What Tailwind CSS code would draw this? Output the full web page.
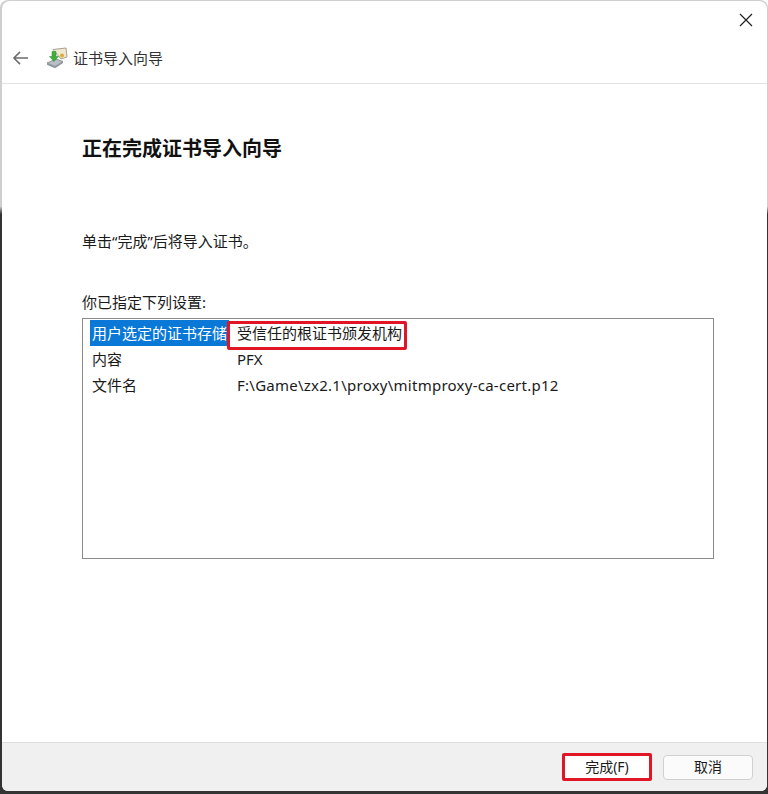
<!DOCTYPE html>
<html lang="zh-CN">
<head>
  <meta charset="UTF-8">
  <title>证书导入向导</title>
  <script src="https://cdn.jsdelivr.net/npm/@tailwindcss/browser@4"></script>
</head>
<body class="w-[768px] h-[794px] overflow-hidden bg-white font-['Noto_Sans','Noto_Sans_CJK_SC',sans-serif] text-[#1a1a1a]">

  <!-- Window -->
  <div class="w-[768px] h-[794px] bg-gradient-to-b from-[#cfcfcf] from-[26%] to-[#333] to-[27%] rounded-t-lg pt-px pl-[2px] pr-px pb-[3px]">
    <div class="h-full flex flex-col bg-white rounded-t-lg rounded-b-md overflow-hidden">

      <!-- Title bar -->
      <header class="h-[83px] shrink-0 relative border-b border-[#e3e3e3]">
        <svg class="absolute left-[737px] top-[12px] w-[14px] h-[14px]" viewBox="0 0 14 14" fill="none" stroke="#222" stroke-width="1.2"><path d="M1 1l12 12M13 1L1 13"/></svg>
        <div class="absolute left-[10px] top-[46px] flex items-center">
          <svg class="w-[17px] h-[18px]" viewBox="0 0 18 18" fill="none" stroke="#6b6b6b" stroke-width="1.6"><path d="M17 9H2M8.500 2.500L2 9l6.500 6.500"/></svg>
          <svg class="w-[22px] h-[22px] ml-[17px]" viewBox="0 0 22 22">
            <path d="M7 2.500l13-1.500 1 9-6 2z" fill="#efe8d2" stroke="#a9a28c" stroke-width="1"/>
            <circle cx="16" cy="8.500" r="2" fill="#e2a93a"/>
            <path d="M1 16l9-4 7 2.500-8 5z" fill="#b9bec4" stroke="#7e858c" stroke-width=".8"/>
            <path d="M9 19.500l8-5v1.600l-8 5.200-8-3.600V16z" fill="#8d949b"/>
            <path d="M6 4.500h4v5h2.500L8 14.500 3.500 9.500H6z" fill="#3fae3c" stroke="#2a8a2a" stroke-width=".5"/>
          </svg>
          <span class="ml-[5px] text-[15px] leading-5 text-[#333]">证书导入向导</span>
        </div>
      </header>

      <!-- Content -->
      <main class="flex-1 pl-[80px] pr-[53px]">
        <h1 class="mt-[51px] text-[20px] leading-7 font-bold text-[#111]">正在完成证书导入向导</h1>
        <p class="mt-[68px] text-[15px] leading-5">单击“完成”后将导入证书。</p>
        <p class="mt-[41px] text-[15px] leading-5">你已指定下列设置:</p>

        <div class="mt-[6px] h-[241px] border border-[#8a8a8a] pt-px pl-[7px] text-[15px]">
          <div class="flex h-[26px] items-center">
            <div class="w-[139px] h-full pl-[2px] flex items-center bg-[#0a78d7] text-white whitespace-nowrap overflow-hidden">用户选定的证书存储</div>
            <div class="relative pl-[8px]">受信任的根证书颁发机构
              <div class="absolute -left-[2px] -top-[1px] w-[180px] h-[29px] border-[3px] border-[#e01626] rounded-[2px]"></div>
            </div>
          </div>
          <div class="flex h-[26px] items-center">
            <div class="w-[139px] pl-[2px]">内容</div>
            <div class="pl-[8px]">PFX</div>
          </div>
          <div class="flex h-[26px] items-center">
            <div class="w-[139px] pl-[2px]">文件名</div>
            <div class="pl-[8px] tracking-[.25px]">F:\Game\zx2.1\proxy\mitmproxy-ca-cert.p12</div>
          </div>
        </div>
      </main>

      <!-- Footer -->
      <footer class="h-[49px] shrink-0 bg-[#f0f0f0] border-t border-[#dedede] flex items-center justify-end gap-[12px] pr-[14px]">
        <div class="relative">
          <button class="w-[88px] h-[25px] bg-white text-sm rounded-[3px]">完成(F)</button>
          <div class="absolute -inset-[1px] border-[3px] border-[#e01626] rounded-[2px]"></div>
        </div>
        <button class="w-[90px] h-[25px] bg-[#fbfbfb] border border-[#d0d0d0] text-sm rounded-[4px]">取消</button>
      </footer>
    </div>
  </div>

</body>
</html>
